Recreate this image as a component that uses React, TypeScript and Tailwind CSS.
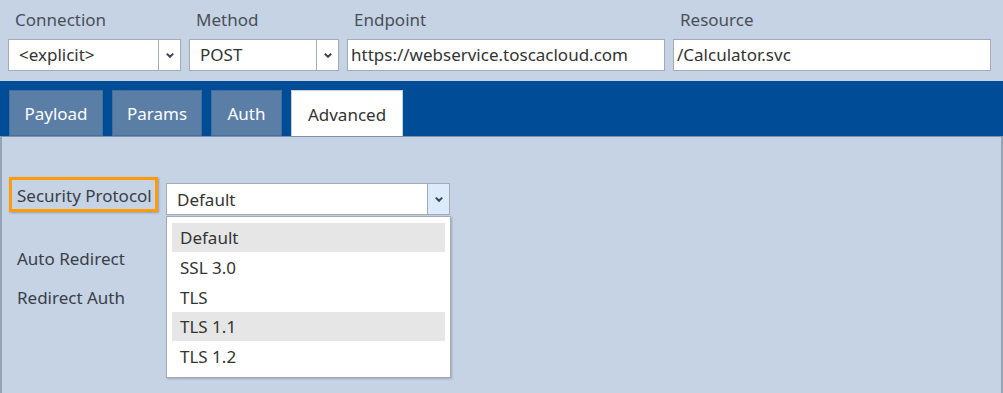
import React from "react";

const Chevron = () => (
  <svg width="10" height="7" viewBox="0 0 10 7" fill="none">
    <path d="M1.8 1.6 L5 4.8 L8.2 1.6" stroke="#3c4450" strokeWidth="2" />
  </svg>
);

function Combo({ value, width, arrowBg = "bg-white", textPad = "" }: { value: string; width: string; arrowBg?: string; textPad?: string }) {
  return (
    <div className={`flex h-[32px] border border-[#a3abb6] bg-white ${width}`}>
      <div className={`flex flex-1 items-center pl-[10px] text-[17px] text-[#333] ${textPad}`}>{value}</div>
      <div className={`flex w-[22px] items-center justify-center border-l border-[#a3abb6] ${arrowBg}`}>
        <Chevron />
      </div>
    </div>
  );
}

function TextBox({ value, width }: { value: string; width: string }) {
  return (
    <div className={`flex h-[32px] items-center border border-[#a3abb6] bg-white pl-[3px] text-[17px] text-[#333] ${width}`}>
      {value}
    </div>
  );
}

export default function App() {
  const font = { fontFamily: '"Segoe UI", "Noto Sans", "Open Sans", sans-serif' };
  return (
    <div className="h-[393px] w-[1003px] overflow-hidden bg-[#c5d3e5] text-[#3a3f47]" style={font}>
      <div className="flex gap-[8px] px-[8px] pt-[8px]">
        <div className="flex flex-col">
          <div className="h-[31px] pl-[7px] text-[17px] leading-[24px] text-[#4a4f57]">Connection</div>
          <Combo value="<explicit>" width="w-[173px]" />
        </div>
        <div className="flex flex-col">
          <div className="h-[31px] pl-[7px] text-[17px] leading-[24px] text-[#4a4f57]">Method</div>
          <Combo value="POST" width="w-[150px]" />
        </div>
        <div className="flex flex-col">
          <div className="h-[31px] pl-[7px] text-[17px] leading-[24px] text-[#4a4f57]">Endpoint</div>
          <TextBox value="https://webservice.toscacloud.com" width="w-[318px]" />
        </div>
        <div className="flex flex-col">
          <div className="h-[31px] pl-[7px] text-[17px] leading-[24px] text-[#4a4f57]">Resource</div>
          <TextBox value="/Calculator.svc" width="w-[318px]" />
        </div>
      </div>

      <div className="mt-[10px] flex h-[55px] items-end gap-[9px] bg-[#004c97] pl-[9px]">
        <div className="flex h-[46px] w-[94px] items-center justify-center border border-[#46709c] bg-[#5a7ea5] pt-[2px] text-[17px] text-white">Payload</div>
        <div className="flex h-[46px] w-[90px] items-center justify-center border border-[#46709c] bg-[#5a7ea5] pt-[2px] text-[17px] text-white">Params</div>
        <div className="flex h-[46px] w-[71px] items-center justify-center border border-[#46709c] bg-[#5a7ea5] pt-[2px] text-[17px] text-white">Auth</div>
        <div className="flex h-[46px] w-[112px] items-center justify-center border border-b-0 border-[#c8d0da] bg-white pt-[2px] text-[17px] text-[#333]">Advanced</div>
      </div>

      <div className="relative h-[257px] border-x-2 border-t border-[#95a3b3] border-t-[#7d93ad]">
        <div className="flex items-start gap-[8px] pl-[7px] pt-[40px]">
          <div className="flex h-[35px] w-[149px] items-center border-[3px] border-[#ff9a0a] pl-[5px] pt-[3px] text-[17px] text-[#3a3f47] shadow-[1px_1px_2px_rgba(0,0,0,0.25)]">
            Security Protocol
          </div>
          <div className="mt-[6px]">
            <Combo value="Default" width="w-[284px]" arrowBg="bg-[#dcebfc]" textPad="pt-[2px]" />
          </div>
        </div>
        <div className="pl-[15px] pt-[24px] text-[17px] leading-[39px] text-[#3a3f47]">
          <div>Auto Redirect</div>
          <div>Redirect Auth</div>
        </div>

        <div className="absolute left-[164px] top-[79px] w-[285px] border border-[#a3abb6] bg-white px-[5px] pt-[6px] pb-[6px] text-[17px] text-[#333] shadow-[1px_1px_2px_rgba(0,0,0,0.2)]">
          <div className="flex h-[29px] items-center bg-[#e6e6e6] pl-[8px]">Default</div>
          <div className="flex h-[30px] items-center pl-[8px] pt-[1px]">SSL 3.0</div>
          <div className="flex h-[30px] items-center pl-[8px] pt-[1px]">TLS</div>
          <div className="flex h-[29px] items-center bg-[#e6e6e6] pl-[8px] pt-[1px]">TLS 1.1</div>
          <div className="flex h-[30px] items-center pl-[8px] pt-[2px]">TLS 1.2</div>
        </div>
      </div>
    </div>
  );
}
